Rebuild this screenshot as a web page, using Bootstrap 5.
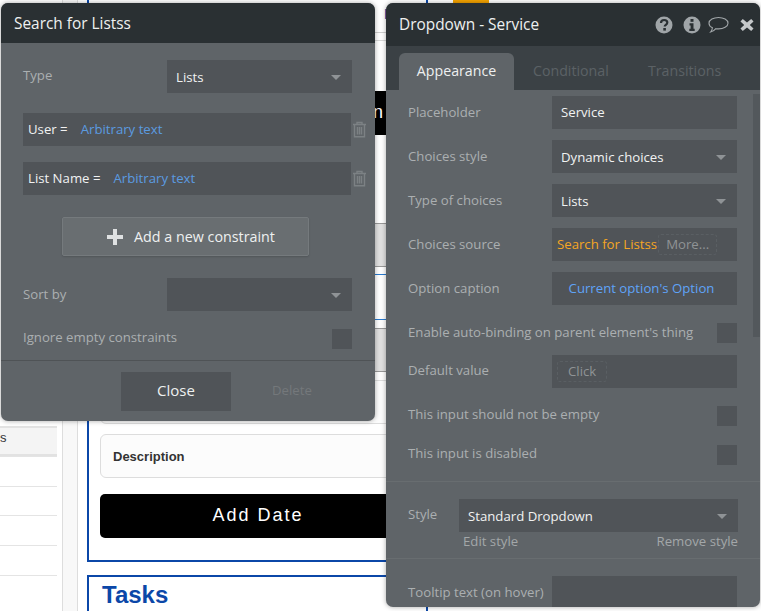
<!doctype html>
<html lang="en">
<head>
<meta charset="utf-8">
<title>Property editor</title>
<link href="https://cdn.jsdelivr.net/npm/bootstrap@5.3.0/dist/css/bootstrap.min.css" rel="stylesheet">
<style>
html,body{margin:0;height:611px;overflow:hidden;background:#fff;font-family:"Open Sans",sans-serif}
.stage{position:relative;width:761px;height:611px;overflow:hidden;display:flex;font-family:"Liberation Sans",Arial,sans-serif}
.sidelist{width:57px;padding-top:426px;flex:none}
.sidelist div{height:29.7px;border-top:1px solid #e4e4e4;font-size:13px;text-align:right;padding-right:55px;color:#333}
.sidelist .head{background:#f4f4f4;border-top:2px solid #e2e2e2;border-bottom:2px solid #e2e2e2;height:30px}
.rail{width:16px;margin-left:5px;flex:none;background:#f8f8f8;border-left:1px solid #ddd;border-right:1px solid #ddd}
.canvas{width:341px;margin-left:9px;flex:none}
.bluebox{border:2px solid #0b47a8;border-top:0;height:562px;padding:0 10px 0 11px;margin-bottom:13px}
.topline{height:33px;border-bottom:1px solid #d0d0d0;color:#1a3fa0;font-size:14px;text-align:right;padding:4px 32px 0 0;margin-right:-10px;margin-left:-11px}
.subline{height:1px;background:#d8d8d8;margin:7px -10px 50px -11px}
.blackbar{height:44px;background:#000;border-radius:5px;color:#fff;font-size:18px;letter-spacing:2px;display:flex;align-items:center;justify-content:center;padding-bottom:2px}
.blackbar.wide{margin-bottom:88px;justify-content:flex-end;padding-right:31px}
.grayblock{height:44px;background:#e0e0e0;border-top:1px solid #999;border-bottom:1px solid #999}
.blueline{height:46px;border-top:1px solid #2a7bd0;border-bottom:1px solid #2a7bd0;margin:7px 0 8px}
.fieldbox{height:44px;border:1px solid #ddd;border-radius:6px;background:#fcfcfc;font-size:13px;font-weight:700;color:#333;display:flex;align-items:center;padding:2px 0 0 12px}
.gap8{margin-top:8px}
.gap10{margin-top:10px}
.gap16{margin-top:16px}
.tasksbox{border:2px solid #0b47a8;border-bottom:0;padding:1px 13px;height:60px}
.tasksbox div{color:#0b47a8;font-size:24px;font-weight:700;line-height:34px}
.goldtab{position:absolute;left:453px;top:0;width:36px;height:4px;background:#f5a300}
.panel{position:absolute;background:#5f6468;border-radius:7px;overflow:hidden;box-shadow:0 0 5px rgba(0,0,0,.35);font-family:"Open Sans",sans-serif;font-size:13.2px;color:#abafb1}
.win-left{left:1px;top:3px;width:374px;height:418px}
.win-right{left:386px;top:3px;width:374px;height:604px}
.titlebar{background:#2a3033;color:#eef0f0;font-size:15.4px;padding:0 13px;display:flex;align-items:center}
.win-left .titlebar{height:40px;padding-top:2px}
.win-right .titlebar{height:43px}
.headicons{margin-left:auto;display:flex;align-items:center;gap:7px;margin-right:-7px}
.qicon{margin-right:3px}
.tabstrip{background:#3b4145;height:44px;padding:7px 0 0 13px;gap:19px;flex-wrap:nowrap}
.tabstrip span{color:#5b6165;font-size:14.2px;line-height:36px;height:37px}
.tabstrip .on{background:#5f6468;color:#eef0f0;border-radius:6px 6px 0 0;width:115px;text-align:center}
.tabstrip .t2{width:96px}
.pane-r{padding:6px 23px 0 22px}
.prow{height:33px;margin-bottom:11px;display:flex;align-items:center;justify-content:space-between}
.prow.tight{margin-bottom:6px}
.prow.flat{margin-bottom:0}
.lift{margin-bottom:2px}
.fld{background:#505458;height:33px;width:185px;display:flex;align-items:center;padding:0 9px;color:#f1f2f2;flex:none}
.sel{position:relative;padding-top:2px}
.sel::after{content:"";position:absolute;right:11px;top:15px;border:5px solid transparent;border-top:5px solid #8f9396;border-bottom:0}
.orange{color:#f5a623;white-space:nowrap}
.moretag,.clicktag{color:#8f9395;border:1px dashed #5a5f63;border-radius:3px;padding:0 7px;line-height:19px}
.moretag{margin-left:1px}
.clicktag{margin-left:5px;padding:0 10px}
.fld.src{padding:0 5px}
.fld.cap{justify-content:center;color:#5fa3f7;padding:0 15px 0 9px;white-space:nowrap}
.fld.def{padding:0}
.tick{width:20px;height:20px;background:#505458;flex:none}
.lineh{border-top:1px solid #686d70;margin:10px -23px 0 -22px}
.lineh.flush{margin-top:0}
.stylerow{padding-top:17px;display:flex;align-items:center;justify-content:space-between;margin-right:-1px}
.stylerow .fld{width:279px}
.stylelinks{display:flex;justify-content:space-between;padding-left:55px;margin-right:-1px;height:18px;line-height:18px;margin-bottom:8px;color:#a3a7a9}
.prow.tip{margin-top:17px}
.scrolltrack{position:absolute;right:0;top:91px;width:7px;height:243px;background:#53585c}
.pane-l{padding:17px 23px 0 22px}
.prow.first{margin-bottom:20px}
.constraint{background:#505458;height:33px;width:328px;display:flex;align-items:center;padding:0 5px;color:#f1f2f2;flex:none;white-space:nowrap}
.constraint em{font-style:normal;color:#5b9be0;margin-left:13px}
.conrow{display:flex;align-items:center;margin-bottom:16px;margin-right:-15px;gap:1px}
.addbtn.btn{display:flex;align-items:center;justify-content:center;width:247px;height:39px;margin:22px 0 22px 39px;background:#696e71;border:1px solid #757a7d;border-radius:2px;color:#eef0f0;font-size:14.3px;padding:0 0 0 11px;gap:11px;box-shadow:0 1px 2px rgba(0,0,0,.15)}
.foot{position:absolute;left:0;right:0;top:357px;height:61px;border-top:1px solid #4f5356;display:flex;align-items:flex-start;padding-top:11px}
.closebtn.btn{width:110px;height:39px;margin-left:120px;background:#505458;color:#eef0f0;border:0;border-radius:0;font-size:15px;padding:0 0 2px}
.delbtn{margin-left:41px;line-height:37px;color:#74787b}
</style>
</head>
<body>
<div class="stage">
  <div class="sidelist">
    <div class="head">s</div><div></div><div></div><div></div><div></div><div></div>
  </div>
  <div class="rail"></div>
  <div class="canvas">
    <div class="bluebox">
      <div class="topline">H</div>
      <div class="subline"></div>
      <div class="blackbar wide">n</div>
      <div class="grayblock"></div>
      <div class="blueline"></div>
      <div class="grayblock"></div>
      <div class="fieldbox gap8"></div>
      <div class="fieldbox gap10">Description</div>
      <div class="blackbar gap16">Add Date</div>
    </div>
    <div class="tasksbox"><div>Tasks</div></div>
  </div>
  <div class="goldtab"></div>

  <section class="panel win-left">
    <div class="titlebar">Search for Listss</div>
    <div class="pane-l">
      <div class="prow first"><span class="lift">Type</span><div class="fld sel">Lists</div></div>
      <div class="conrow">
        <div class="constraint"><span>User =</span><em>Arbitrary text</em></div>
        <svg width="15" height="17" viewBox="0 0 15 17" fill="none" stroke="#7c8184" stroke-width="1.4"><path d="M1 3.500h13M5 3.500V1.500h5v2M2.500 3.500v12.200h10V3.500M5.500 6v7.500M7.500 6v7.500M9.500 6v7.500"/></svg>
      </div>
      <div class="conrow">
        <div class="constraint"><span>List Name =</span><em>Arbitrary text</em></div>
        <svg width="15" height="17" viewBox="0 0 15 17" fill="none" stroke="#7c8184" stroke-width="1.4"><path d="M1 3.500h13M5 3.500V1.500h5v2M2.500 3.500v12.200h10V3.500M5.500 6v7.500M7.500 6v7.500M9.500 6v7.500"/></svg>
      </div>
      <button type="button" class="btn addbtn"><svg width="16" height="16" viewBox="0 0 16 16"><path d="M6 0h4v6h6v4h-6v6H6v-6H0V6h6z" fill="#dfe1e2"/></svg><span>Add a new constraint</span></button>
      <div class="prow"><span>Sort by</span><div class="fld sel"></div></div>
      <div class="prow"><span class="lift">Ignore empty constraints</span><div class="tick"></div></div>
    </div>
    <div class="foot">
      <button type="button" class="btn closebtn">Close</button>
      <span class="delbtn">Delete</span>
    </div>
  </section>

  <section class="panel win-right">
    <div class="titlebar">Dropdown - Service
      <div class="headicons">
        <svg class="qicon" width="18" height="18" viewBox="0 0 18 18"><circle cx="9" cy="9" r="8.500" fill="#a0a5a8"/><path d="M6 7c0-2 1.500-3 3.200-3C11 4 12.300 5 12.300 6.600c0 2.200-2.600 2.400-2.600 4" fill="none" stroke="#2a3033" stroke-width="2.200"/><rect x="8.300" y="12" width="2.600" height="2.600" fill="#2a3033"/></svg>
        <svg width="18" height="18" viewBox="0 0 18 18"><circle cx="9" cy="9" r="8.500" fill="#a0a5a8"/><rect x="7.500" y="3" width="3" height="2.800" fill="#2a3033"/><path d="M6.500 7.200h4v5.500h1.200v2.200H6.300v-2.200h1.300V9.400H6.500z" fill="#2a3033"/></svg>
        <svg width="21" height="18" viewBox="0 0 21 18" fill="none" stroke="#a0a5a8" stroke-width="1.100"><path d="M10.500 1.500c5 0 9.500 2.300 9.500 5.700s-4.500 5.700-9.500 5.700c-1 0-1.800-.1-2.700-.2-1 1.300-3 2.800-5.200 3.300 1-1.200 1.700-2.500 1.800-4.300C2.200 10.700 1 9 1 7.200 1 3.800 5.500 1.500 10.500 1.500z"/></svg>
        <svg width="14" height="14" viewBox="0 0 15 15" class="ms-1"><path d="M3 1l4.500 3.800L12 1l2.500 2.800-4 3.700 4 3.700-2.500 2.800-4.500-3.800L3 14 .5 11.200l4-3.700-4-3.700z" fill="#c5c8ca"/></svg>
      </div>
    </div>
    <div class="nav tabstrip"><span class="on">Appearance</span><span class="t2">Conditional</span><span>Transitions</span></div>
    <div class="pane-r">
      <div class="prow"><span>Placeholder</span><div class="fld">Service</div></div>
      <div class="prow"><span>Choices style</span><div class="fld sel">Dynamic choices</div></div>
      <div class="prow"><span>Type of choices</span><div class="fld sel">Lists</div></div>
      <div class="prow"><span>Choices source</span><div class="fld src"><span class="orange">Search for Listss</span><span class="moretag">More...</span></div></div>
      <div class="prow"><span>Option caption</span><div class="fld cap">Current option's Option</div></div>
      <div class="prow tight"><span>Enable auto-binding on parent element's thing</span><div class="tick"></div></div>
      <div class="prow"><span class="lift">Default value</span><div class="fld def"><span class="clicktag">Click</span></div></div>
      <div class="prow tight"><span class="lift">This input should not be empty</span><div class="tick"></div></div>
      <div class="prow flat"><span class="lift">This input is disabled</span><div class="tick"></div></div>
      <div class="lineh"></div>
      <div class="stylerow"><span class="lift">Style</span><div class="fld sel">Standard Dropdown</div></div>
      <div class="stylelinks"><span>Edit style</span><span>Remove style</span></div>
      <div class="lineh flush"></div>
      <div class="prow tip"><span>Tooltip text (on hover)</span><div class="fld"></div></div>
    </div>
    <div class="scrolltrack"></div>
  </section>
</div>
<script src="https://cdn.jsdelivr.net/npm/bootstrap@5.3.0/dist/js/bootstrap.bundle.min.js"></script>
</body>
</html>
